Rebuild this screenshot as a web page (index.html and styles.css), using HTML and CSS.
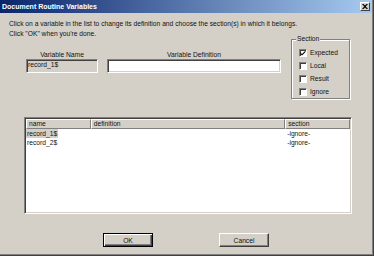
FILE: index.html
```html
<!DOCTYPE html>
<html lang="en">
<head>
  <meta charset="UTF-8">
  <title>Document Routine Variables</title>
  <link rel="stylesheet" href="styles.css">
</head>
<body>
  <div class="window">
    <div class="titlebar">
      <span class="title">Document Routine Variables</span>
      <button class="close">
        <svg width="6" height="5" viewBox="0 0 6 5"><path d="M0 0h1.5l1.5 1.6 1.5-1.6h1.5l-2.2 2.5 2.2 2.5h-1.5l-1.5-1.6-1.5 1.6h-1.5l2.2-2.5z" fill="#000"/></svg>
      </button>
    </div>

    <div class="content">
      <p class="intro">Click on a variable in the list to change its definition and choose the section(s) in which it belongs.<br>Click "OK" when you're done.</p>

      <div class="top-row">
        <div class="field name-field">
          <div class="field-label">Variable Name</div>
          <div class="input disabled">record_1$</div>
        </div>
        <div class="field def-field">
          <div class="field-label">Variable Definition</div>
          <div class="input"></div>
        </div>
        <div class="group">
          <span class="legend">Section</span>
          <div class="check-row"><span class="checkbox checked"><svg width="6" height="6" viewBox="0 0 6 6"><path d="M0.5 2.5l1.5 1.5 3.5-3.5v1.5l-3.5 3.5-1.5-1.5z" fill="#000"/></svg></span>Expected</div>
          <div class="check-row"><span class="checkbox"></span>Local</div>
          <div class="check-row"><span class="checkbox"></span>Result</div>
          <div class="check-row"><span class="checkbox"></span>Ignore</div>
        </div>
      </div>

      <div class="list">
        <div class="list-header">
          <div class="col col-name">name</div>
          <div class="col col-def">definition</div>
          <div class="col col-sec">section</div>
        </div>
        <div class="list-row">
          <div class="col-name"><span class="selected">record_1$</span></div>
          <div class="col-def"></div>
          <div class="col-sec">-ignore-</div>
        </div>
        <div class="list-row">
          <div class="col-name"><span>record_2$</span></div>
          <div class="col-def"></div>
          <div class="col-sec">-ignore-</div>
        </div>
      </div>

      <div class="buttons">
        <button class="btn default">OK</button>
        <button class="btn">Cancel</button>
      </div>
    </div>
  </div>
</body>
</html>
```

FILE: styles.css
```css
* {
  box-sizing: border-box;
}
body {
  margin: 0;
  font-family: "Liberation Sans", Arial, sans-serif;
  font-size: 6.7px;
  color: #111;
  background: #d4d0c8;
  overflow: hidden;
}
.window {
  width: 374px;
  height: 256px;
  background: #d4d0c8;
  border-right: 1px solid #404040;
  border-bottom: 1px solid #404040;
  box-shadow: inset -1px -1px 0 #808080;
}
.titlebar {
  height: 13px;
  margin-right: 1px;
  display: flex;
  align-items: center;
  justify-content: space-between;
  padding: 0 2px 0 2px;
  background: linear-gradient(to right, #0a246a, #a6caf0);
}
.title {
  color: #fff;
  font-weight: bold;
  font-size: 7px;
}
.close {
  width: 10px;
  height: 9px;
  padding: 0;
  display: flex;
  align-items: center;
  justify-content: center;
  background: #d4d0c8;
  border: 1px solid;
  border-color: #fff #404040 #404040 #fff;
}
.content {
  padding-top: 6px;
}
.intro {
  margin: 0 0 0 9px;
  line-height: 10px;
  height: 20px;
}
.top-row {
  display: flex;
  align-items: flex-start;
  padding-left: 26px;
}
.field {
  margin-top: 12px;
}
.name-field {
  width: 72px;
}
.def-field {
  width: 174px;
  margin-left: 9px;
}
.field-label {
  text-align: center;
  line-height: 8px;
}
.input {
  height: 14px;
  line-height: 10px;
  padding-left: 1px;
  background: #fff;
  border: 1px solid;
  border-color: #808080 #fff #fff #808080;
  box-shadow: inset 1px 1px 0 #404040, inset -1px -1px 0 #d4d0c8;
}
.input.disabled {
  background: #d4d0c8;
}
.group {
  width: 59px;
  height: 60px;
  margin-left: 10px;
  border: 1px solid #808080;
  box-shadow: inset 1px 1px 0 #fff, 1px 1px 0 #fff;
}
.legend {
  display: block;
  width: fit-content;
  margin: -5px 0 0 4px;
  padding: 0 1px;
  line-height: 8px;
  background: #d4d0c8;
}
.check-row {
  display: flex;
  align-items: center;
  height: 13px;
  padding-left: 7px;
}
.check-row:first-of-type {
  margin-top: 3px;
}
.checkbox {
  width: 8px;
  height: 8px;
  margin-right: 3px;
  display: flex;
  align-items: center;
  justify-content: center;
  background: #fff;
  border: 1px solid;
  border-color: #808080 #fff #fff #808080;
  box-shadow: inset 1px 1px 0 #404040;
}
.list {
  width: 328px;
  height: 97px;
  margin: 18px 0 0 24px;
  background: #fff;
  border: 1px solid;
  border-color: #808080 #fff #fff #808080;
  box-shadow: inset 1px 1px 0 #404040, inset -1px -1px 0 #d4d0c8;
  padding: 1px;
}
.list-header {
  display: flex;
  height: 10px;
  line-height: 8px;
}
.list-header .col {
  background: #d4d0c8;
  border: 1px solid;
  border-color: #fff #808080 #808080 #fff;
  padding-left: 2px;
}
.col-name {
  width: 65px;
}
.col-def {
  width: 195px;
}
.col-sec {
  width: 65px;
}
.list-row {
  display: flex;
  line-height: 9px;
}
.list-row .col-name span {
  padding: 0 1px;
}
.list-row .col-sec {
  padding-left: 2px;
}
.selected {
  display: inline-block;
  background: #d4d0c8;
}
.buttons {
  display: flex;
  gap: 66px;
  margin: 19px 0 0 103px;
}
.btn {
  width: 50px;
  height: 14px;
  padding: 0;
  font-family: inherit;
  font-size: 6.7px;
  color: #111;
  background: #d4d0c8;
  border: 1px solid;
  border-color: #fff #404040 #404040 #fff;
  box-shadow: inset -1px -1px 0 #808080;
}
.btn.default {
  border-color: #000;
  box-shadow: inset 1px 1px 0 #fff, inset -1px -1px 0 #404040, inset -2px -2px 0 #808080;
}
```
